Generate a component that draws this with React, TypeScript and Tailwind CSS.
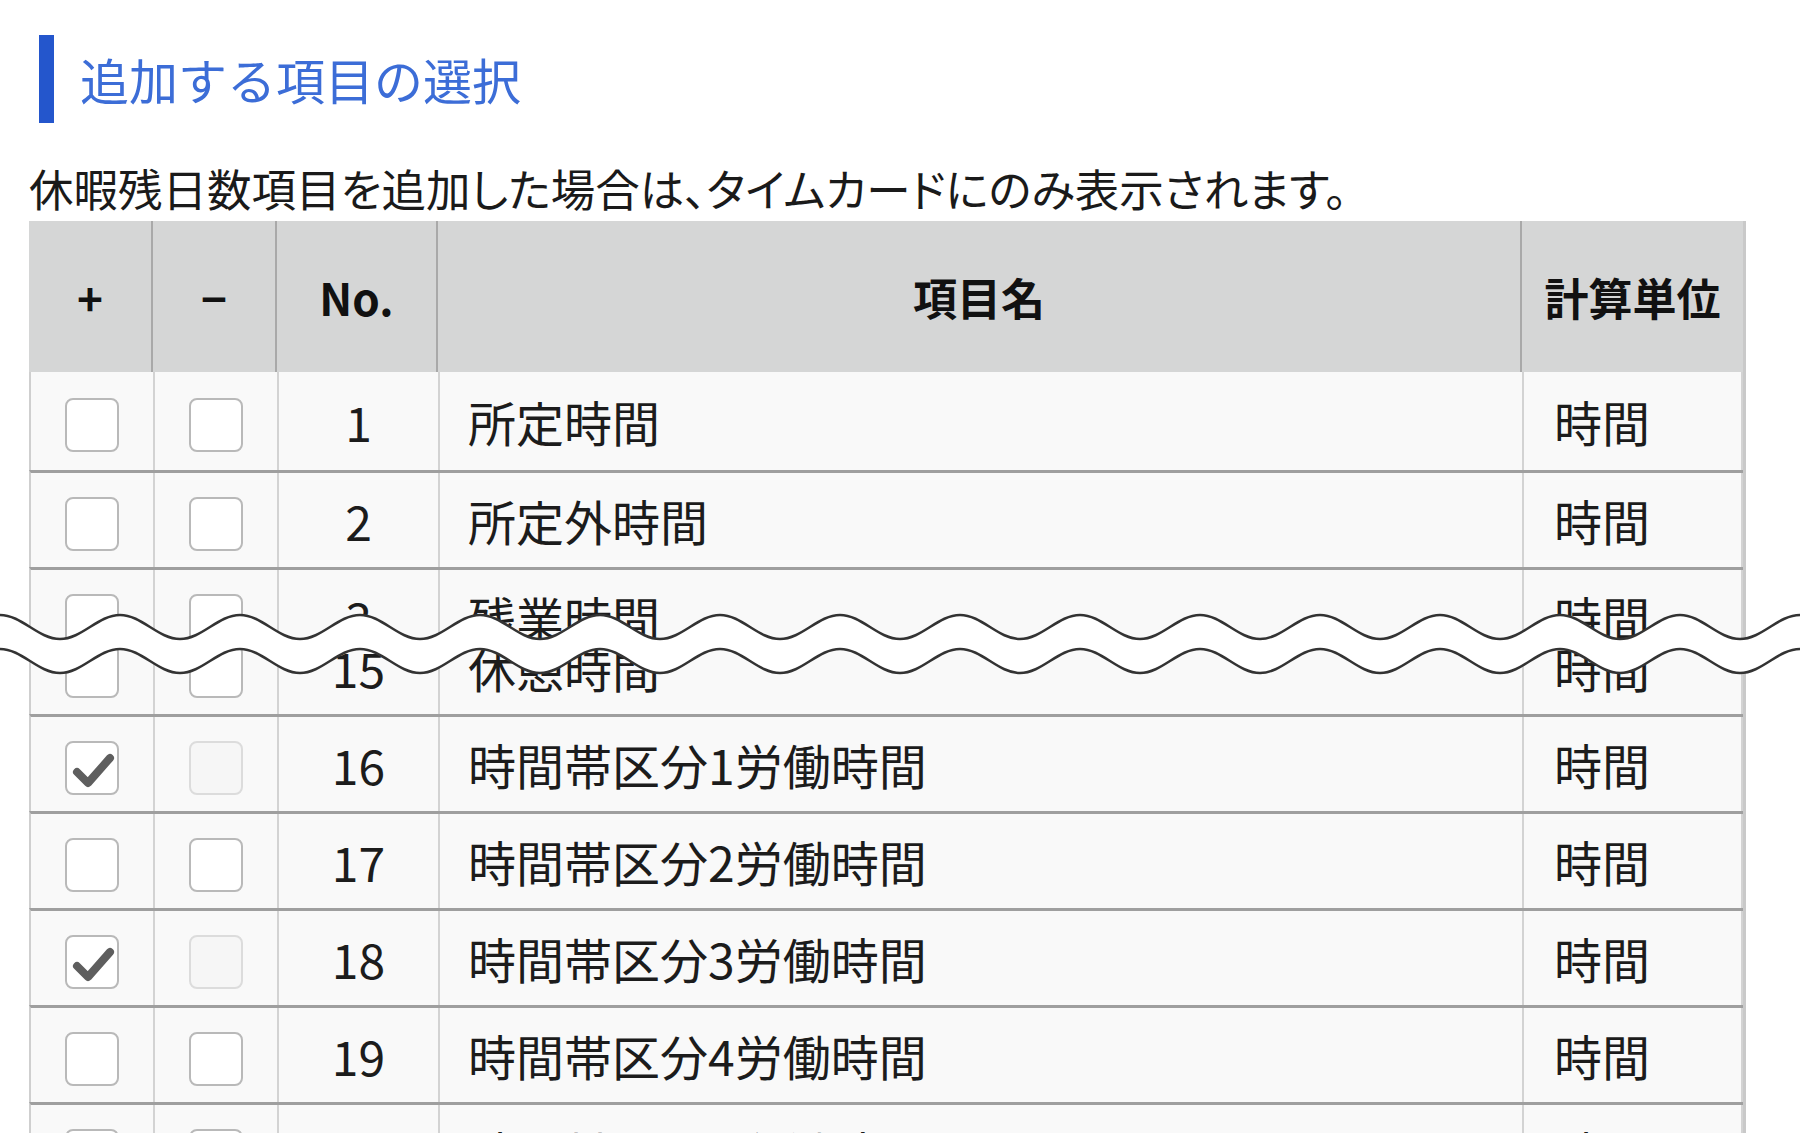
import type { ReactNode } from "react";

type Item = {
  no: number;
  name: string;
  unit: string;
  plus?: boolean;
};

const FONT = "font-['Noto_Sans_CJK_JP','Noto_Sans',sans-serif]";
const COLS = "grid-cols-[124px_124px_161px_1084px_1fr]";

// wave cut mark: tops at x = 0,120,240… ; 24px from top to bottom
function wavePath(y: number, dir: 1 | -1) {
  const half = 60;
  const amp = 24;
  const n = 30;
  let d = "";
  if (dir === 1) {
    d = `M0,${y}`;
    for (let i = 0; i < n; i++) {
      const x0 = i * half;
      const y0 = i % 2 === 0 ? y : y + amp;
      const y1 = i % 2 === 0 ? y + amp : y;
      d += ` C${x0 + 22},${y0} ${x0 + 38},${y1} ${x0 + half},${y1}`;
    }
  } else {
    d = `L${n * half},${y}`;
    for (let i = n; i > 0; i--) {
      const x0 = i * half;
      const y0 = i % 2 === 0 ? y : y + amp;
      const y1 = i % 2 === 0 ? y + amp : y;
      d += ` C${x0 - 22},${y0} ${x0 - 38},${y1} ${x0 - half},${y1}`;
    }
  }
  return d;
}

function CutMark() {
  const upper = 3;
  const lower = 37;
  return (
    <svg
      className="pointer-events-none absolute -left-[29px] top-[45px] h-[64px] w-[1800px]"
      viewBox="0 0 1800 64"
      fill="none"
      aria-hidden="true"
    >
      <path d={wavePath(upper, 1) + " " + wavePath(lower, -1) + " Z"} fill="#fff" />
      <path d={wavePath(upper, 1)} stroke="#333" strokeWidth="2.5" />
      <path d={wavePath(lower, 1)} stroke="#333" strokeWidth="2.5" />
    </svg>
  );
}

function Checkbox({ checked, disabled }: { checked?: boolean; disabled?: boolean }) {
  return (
    <div
      className={`mt-[7px] h-[54px] w-[54px] rounded-[8px] border-2 ${
        disabled ? "border-[#dcdcdc] bg-[#f6f6f6]" : "border-[#b9b9b9] bg-white"
      }`}
    >
      {checked && (
        <svg viewBox="0 0 50 50" className="h-full w-full" aria-hidden="true">
          <path
            d="M10,29 L21,40 L43,15"
            stroke="#5e5e5e"
            strokeWidth="8"
            strokeLinecap="round"
            strokeLinejoin="round"
            fill="none"
          />
        </svg>
      )}
    </div>
  );
}

function Cell({ children, className = "" }: { children?: ReactNode; className?: string }) {
  return <div className={`flex items-center border-r-2 border-[#d3d3d3] ${className}`}>{children}</div>;
}

function Row({ item, first }: { item: Item; first?: boolean }) {
  return (
    <div
      className={`grid shrink-0 ${COLS} border-l-2 border-[#cfcfcf] bg-[#f9f9f9] text-[48px] text-[#1c1c1c] ${
        first ? "h-[98px]" : "h-[97px] border-t-[3px] border-t-[#9f9f9f]"
      }`}
    >
      <Cell className="justify-center">
        <Checkbox checked={item.plus} />
      </Cell>
      <Cell className="justify-center">
        <Checkbox disabled={item.plus} />
      </Cell>
      <Cell className="justify-center">{item.no}</Cell>
      <Cell className="pl-[28px]">{item.name}</Cell>
      <Cell className="border-r-0 pl-[30px]">{item.unit}</Cell>
    </div>
  );
}

const TOP: Item[] = [
  { no: 1, name: "所定時間", unit: "時間" },
  { no: 2, name: "所定外時間", unit: "時間" },
];

const BOTTOM: Item[] = [
  { no: 16, name: "時間帯区分1労働時間", unit: "時間", plus: true },
  { no: 17, name: "時間帯区分2労働時間", unit: "時間" },
  { no: 18, name: "時間帯区分3労働時間", unit: "時間", plus: true },
  { no: 19, name: "時間帯区分4労働時間", unit: "時間" },
  { no: 20, name: "時間帯区分5労働時間", unit: "時間" },
];

export default function App() {
  return (
    <div className={`min-h-[1133px] w-[1800px] bg-white pl-[29px] ${FONT}`}>
      <div className="ml-[10px] mt-[35px] flex h-[88px] items-center">
        <div className="h-[88px] w-[15px] bg-[#2456cc]" />
        <h2 className="ml-[26px] text-[49px] font-normal text-[#3c6dd7]">追加する項目の選択</h2>
      </div>

      <p className="mt-[32px] h-[66px] text-[44.5px] leading-[66px] text-[#1a1a1a] [font-feature-settings:'palt']">
        休暇残日数項目を追加した場合は、タイムカードにのみ表示されます。
      </p>

      <div className="w-[1717px] border-r-[3px] border-[#c9c9c9]">
        <div className={`grid h-[151px] ${COLS} bg-[#d5d6d6] text-[44px] font-bold text-[#111]`}>
          <div className="flex items-center justify-center border-r-2 border-[#a9a9a9]">+</div>
          <div className="flex items-center justify-center border-r-2 border-[#a9a9a9]">−</div>
          <div className="flex items-center justify-center border-r-2 border-[#a9a9a9]">No.</div>
          <div className="flex items-center justify-center border-r-2 border-[#a9a9a9]">項目名</div>
          <div className="flex items-center justify-center">計算単位</div>
        </div>

        {TOP.map((item, i) => (
          <Row key={item.no} item={item} first={i === 0} />
        ))}

        <div className="relative">
          <div className="flex h-[76px] flex-col overflow-hidden">
            <Row item={{ no: 3, name: "残業時間", unit: "時間" }} />
          </div>
          <div className="flex h-[71px] flex-col justify-end overflow-hidden">
            <Row item={{ no: 15, name: "休憩時間", unit: "時間" }} />
          </div>
          <CutMark />
        </div>

        {BOTTOM.map((item) => (
          <Row key={item.no} item={item} />
        ))}
      </div>
    </div>
  );
}
